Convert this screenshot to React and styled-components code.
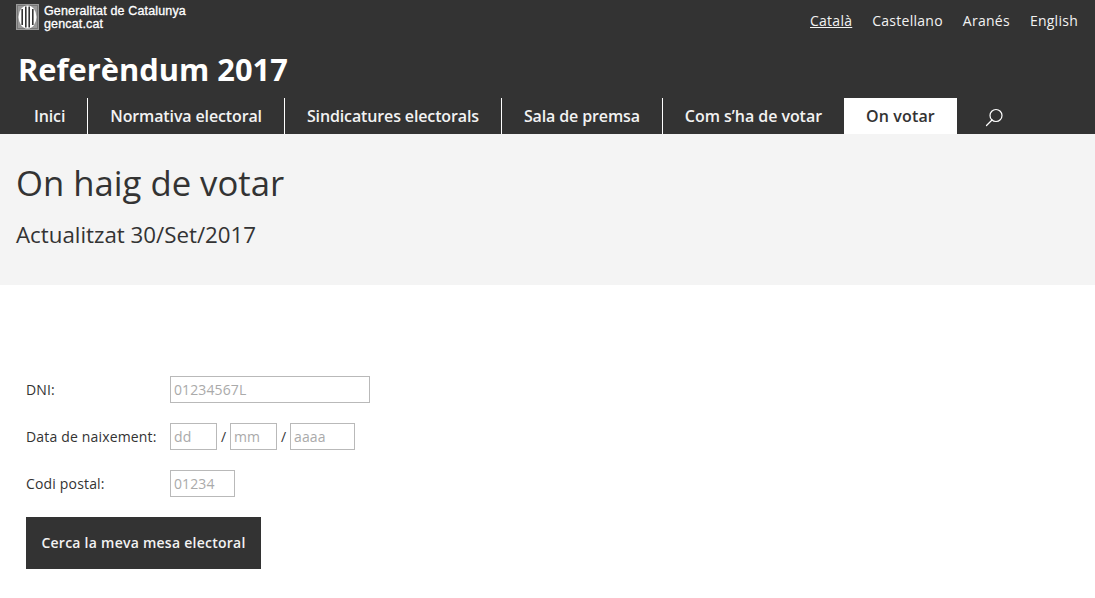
import React from "react";
import styled, { createGlobalStyle } from "styled-components";

const Global = createGlobalStyle`
  html, body { margin: 0; padding: 0; background: #fff; }
  body { font-family: "Open Sans", sans-serif; color: #333; }
  * { box-sizing: border-box; }
  input::placeholder { color: #aaa; opacity: 1; }
`;

const Header = styled.header`
  background: #333;
  height: 134px;
  display: flex;
  flex-direction: column;
`;
const TopBar = styled.div`
  display: flex;
  justify-content: space-between;
  height: 46px;
  padding: 4px 17px 0 16px;
`;
const Brand = styled.div`
  display: flex;
  gap: 5px;
  align-items: flex-start;
`;
const BrandText = styled.div`
  font-family: "Liberation Sans", sans-serif;
  color: #fff;
  font-size: 12.5px;
  line-height: 13px;
  font-weight: 400;
  letter-spacing: 0.15px;
  -webkit-text-stroke: 0.3px #fff;
  padding-top: 1px;
`;
const Langs = styled.nav`
  display: flex;
  gap: 20px;
  padding-top: 7px;
`;
const Lang = styled.a`
  color: #f2f2f2;
  font-size: 14px;
  line-height: 19px;
  letter-spacing: 0.26px;
  text-decoration: ${(p) => (p.$active ? "underline" : "none")};
`;
const Title = styled.h1`
  margin: 0;
  height: 52px;
  padding-left: 18px;
  color: #fff;
  font-size: 30.85px;
  line-height: 46px;
  font-weight: 700;
`;
const Menu = styled.nav`
  display: flex;
  height: 36px;
  padding-left: 12px;
`;
const MenuItem = styled.a`
  display: flex;
  align-items: center;
  padding: 0 22px;
  font-size: 16px;
  font-weight: 600;
  letter-spacing: ${(p) => (p.$active ? "0.14px" : p.$wide ? "-0.05px" : "-0.13px")};
  color: ${(p) => (p.$active ? "#333" : "#f2f2f2")};
  background: ${(p) => (p.$active ? "#fff" : "transparent")};
  border-right: ${(p) => (p.$sep ? "1px solid #fff" : "none")};
`;
const SearchButton = styled.span`
  display: flex;
  align-items: center;
  padding: 3px 0 0 28px;
`;
const Banner = styled.section`
  background: #f4f4f4;
  height: 151px;
  padding: 24px 16px 0;
`;
const PageTitle = styled.h2`
  margin: 0;
  font-size: 34.7px;
  line-height: 50px;
  font-weight: 400;
  color: #333;
`;
const Subtitle = styled.p`
  margin: 13px 0 0;
  font-size: 22.3px;
  line-height: 28px;
  color: #333;
`;
const Form = styled.form`
  padding: 91px 26px 0;
  display: flex;
  flex-direction: column;
  align-items: flex-start;
`;
const Row = styled.div`
  display: flex;
  align-items: center;
  height: 27px;
  margin-bottom: 20px;
`;
const Label = styled.label`
  width: 144px;
  font-size: 14px;
  letter-spacing: 0.17px;
  color: #333;
`;
const Field = styled.input`
  width: ${(p) => p.$w}px;
  height: 27px;
  border: 1px solid #b9b9b9;
  padding: 0 2px 0 3px;
  font-family: "Open Sans", sans-serif;
  font-size: 14px;
  letter-spacing: 0.12px;
  color: #333;
  background: #fff;
  outline: none;
`;
const Slash = styled.span`
  width: 13px;
  text-align: center;
  font-size: 14px;
  color: #333;
`;
const Submit = styled.button`
  width: 235px;
  height: 52px;
  border: 0;
  padding: 0 0 2px;
  background: #333;
  color: #f2f2f2;
  font-family: "Open Sans", sans-serif;
  font-size: 14px;
  font-weight: 600;
  letter-spacing: 0.25px;
  cursor: pointer;
`;

const Logo = () => (
  <svg width="23" height="26" viewBox="0 0 23 26">
    <rect x="0" y="0" width="23" height="26" fill="#999" />
    <rect x="1.5" y="1.5" width="20" height="23" fill="none" stroke="#555" strokeWidth="1" strokeDasharray="1 1" />
    <ellipse cx="11.5" cy="13" rx="9" ry="11.5" fill="#fff" />
    <path d="M6.2 5V21M9.8 2.6V23.4M13.2 2.6V23.4M16.8 5V21" stroke="#333" strokeWidth="1.6" />
  </svg>
);

const Search = () => (
  <svg width="19" height="19" viewBox="0 0 19 19" fill="none" stroke="#fff" strokeWidth="1.2">
    <circle cx="11" cy="7.5" r="6" />
    <path d="M7 12L1.5 17.5" strokeLinecap="round" />
  </svg>
);

export default function App() {
  return (
    <>
      <Global />
      <Header>
        <TopBar>
          <Brand>
            <Logo />
            <BrandText>
              Generalitat de Catalunya
              <br />
              gencat.cat
            </BrandText>
          </Brand>
          <Langs>
            <Lang $active>Català</Lang>
            <Lang>Castellano</Lang>
            <Lang>Aranés</Lang>
            <Lang>English</Lang>
          </Langs>
        </TopBar>
        <Title>Referèndum 2017</Title>
        <Menu>
          <MenuItem $sep>Inici</MenuItem>
          <MenuItem $sep>Normativa electoral</MenuItem>
          <MenuItem $sep>Sindicatures electorals</MenuItem>
          <MenuItem $sep>Sala de premsa</MenuItem>
          <MenuItem $wide>Com s’ha de votar</MenuItem>
          <MenuItem $active>On votar</MenuItem>
          <SearchButton>
            <Search />
          </SearchButton>
        </Menu>
      </Header>
      <Banner>
        <PageTitle>On haig de votar</PageTitle>
        <Subtitle>Actualitzat 30/Set/2017</Subtitle>
      </Banner>
      <Form>
        <Row>
          <Label>DNI:</Label>
          <Field $w={200} placeholder="01234567L" />
        </Row>
        <Row>
          <Label>Data de naixement:</Label>
          <Field $w={47} placeholder="dd" />
          <Slash>/</Slash>
          <Field $w={47} placeholder="mm" />
          <Slash>/</Slash>
          <Field $w={65} placeholder="aaaa" />
        </Row>
        <Row>
          <Label>Codi postal:</Label>
          <Field $w={65} placeholder="01234" />
        </Row>
        <Submit type="button">Cerca la meva mesa electoral</Submit>
      </Form>
    </>
  );
}
